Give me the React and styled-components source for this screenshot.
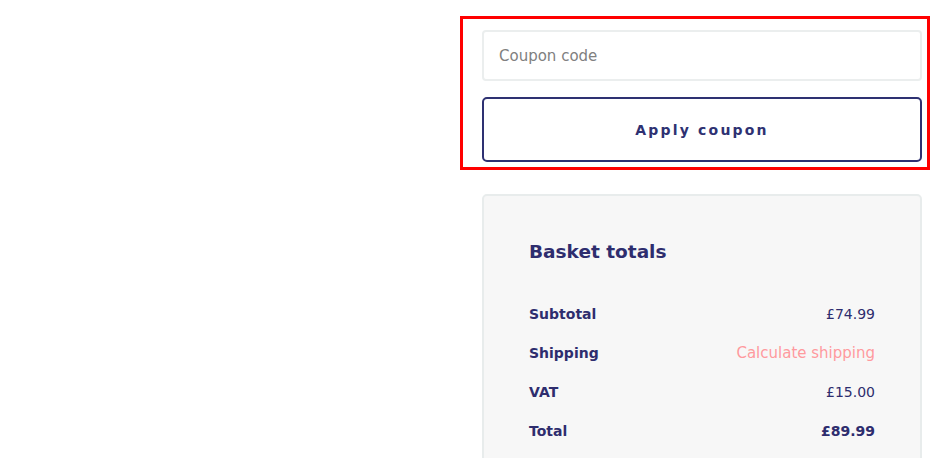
import React from "react";
import styled, { createGlobalStyle } from "styled-components";

const Global = createGlobalStyle`
  html, body { margin: 0; padding: 0; background: #fff; }
  body { font-family: "DejaVu Sans", "Open Sans", sans-serif; }
  * { box-sizing: border-box; }
`;

const Page = styled.div`
  display: grid;
  grid-template-columns: 460px 470px;
  padding-top: 16px;
`;

const Column = styled.div`
  grid-column: 2;
  display: flex;
  flex-direction: column;
`;

const CouponForm = styled.form`
  border: 3px solid #ff0000;
  padding: 11px 5px 5px 19px;
  display: flex;
  flex-direction: column;
  gap: 16px;
  margin: 0;
`;

const CouponInput = styled.input`
  height: 51px;
  width: 100%;
  border: 2px solid #ebeeee;
  border-radius: 4px;
  padding: 0 15px;
  font-family: inherit;
  font-size: 15px;
  color: #333;
  outline: none;
  &::placeholder { color: #808080; }
`;

const ApplyButton = styled.button`
  height: 65px;
  width: 100%;
  background: #fff;
  border: 2px solid #2e3172;
  border-radius: 5px;
  font-family: inherit;
  font-weight: 700;
  font-size: 14px;
  letter-spacing: 2.2px;
  color: #2e3172;
  cursor: pointer;
`;

const Card = styled.section`
  margin: 24px 8px 0 22px;
  background: #f7f7f7;
  border: 2px solid #e8ecec;
  border-radius: 5px;
  padding: 38px 45px 30px;
`;

const Title = styled.h2`
  margin: 0 0 34px;
  font-size: 18.5px;
  font-weight: 700;
  color: #2e2d6e;
  line-height: 36px;
`;

const Rows = styled.dl`
  margin: 0;
  display: flex;
  flex-direction: column;
  gap: 19px;
`;

const Row = styled.div`
  display: flex;
  justify-content: space-between;
  align-items: center;
  height: 20px;
  font-size: 14px;
  color: #2e2d6e;
`;

const Label = styled.dt`
  font-weight: 700;
`;

const Value = styled.dd`
  margin: 0;
  font-weight: ${(p) => (p.$bold ? 700 : 400)};
  font-size: ${(p) => (p.$link ? "15px" : "14px")};
  color: ${(p) => (p.$link ? "#ff9a9e" : "#2e2d6e")};
`;

const rows = [
  { label: "Subtotal", value: "£74.99" },
  { label: "Shipping", value: "Calculate shipping", link: true },
  { label: "VAT", value: "£15.00" },
  { label: "Total", value: "£89.99", bold: true },
];

export default function App() {
  return (
    <>
      <Global />
      <Page>
        <Column>
          <CouponForm onSubmit={(e) => e.preventDefault()}>
            <CouponInput placeholder="Coupon code" />
            <ApplyButton type="submit">Apply coupon</ApplyButton>
          </CouponForm>
          <Card>
            <Title>Basket totals</Title>
            <Rows>
              {rows.map((r) => (
                <Row key={r.label}>
                  <Label>{r.label}</Label>
                  <Value $bold={r.bold} $link={r.link}>{r.value}</Value>
                </Row>
              ))}
            </Rows>
          </Card>
        </Column>
      </Page>
    </>
  );
}
